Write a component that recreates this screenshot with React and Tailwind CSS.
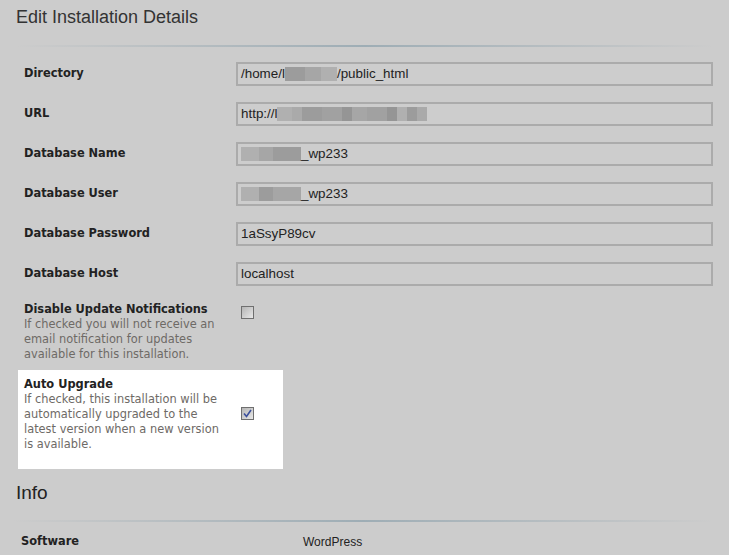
import React from "react";

const labelFont = { fontFamily: '"DejaVu Sans", Verdana, sans-serif' };
const inputFont = { fontFamily: '"Liberation Sans", Arial, sans-serif' };

function Blur({ cells }) {
  // pixelated blur strip used to hide private parts of values
  return (
    <span className="inline-flex h-[14px] align-middle">
      {cells.map((c, i) => (
        <span key={i} className="h-full" style={{ width: c[0], background: c[1] }} />
      ))}
    </span>
  );
}

function Field({ label, children }) {
  return (
    <div className="flex h-[40px] items-center">
      <div className="w-[218px] pl-[6px] text-[11.4px] font-bold text-[#222]" style={labelFont}>
        {label}
      </div>
      <div
        className="flex h-[24px] flex-1 items-center border-2 border-[#ababab] bg-[#cdcdcd] pl-[3px] text-[13.4px] text-[#222]"
        style={inputFont}
      >
        {children}
      </div>
    </div>
  );
}

function Checkbox({ checked }) {
  return (
    <div className="flex h-[13px] w-[13px] items-center justify-center border border-[#6f6f6f] bg-gradient-to-br from-[#b5b5b5] to-[#e8e8e8]">
      {checked && (
        <svg width="9" height="9" viewBox="0 0 9 9">
          <path d="M1 4.5 L3.5 7.5 L8 1" fill="none" stroke="#3b4f9c" strokeWidth="1.6" />
        </svg>
      )}
    </div>
  );
}

function Separator() {
  return (
    <div className="h-[2px] bg-gradient-to-r from-transparent via-[#9eadb5] to-transparent" />
  );
}

export default function App() {
  const g = ["#a6a6a6", "#9c9c9c", "#b0b0b0", "#a1a1a1", "#aaa", "#959595"];
  return (
    <div className="min-h-[555px] w-full bg-[#cccccc] pl-[12px] pr-[16px] text-[#333]">
      <h1 className="pl-[4px] pt-[5px] text-[18px] leading-[24px] text-[#333]" style={inputFont}>
        Edit Installation Details
      </h1>
      <div className="mt-[16px] pl-[4px]">
        <Separator />
      </div>

      <div className="mt-[7px] pl-[6px]">
        <Field label="Directory">
          /home/l
          <Blur cells={[[20, g[1]], [16, g[0]], [16, g[2]]]} />
          /public_html
        </Field>
        <Field label="URL">
          http://l
          <Blur
            cells={[
              [15, g[2]], [10, g[4]], [20, g[1]], [20, g[3]], [10, g[5]], [15, g[0]],
              [20, g[3]], [10, g[5]], [10, g[2]], [10, g[1]], [10, g[4]],
            ]}
          />
        </Field>
        <Field label="Database Name">
          <Blur cells={[[18, g[2]], [14, g[0]], [28, g[1]]]} />
          _wp233
        </Field>
        <Field label="Database User">
          <Blur cells={[[18, g[2]], [14, g[1]], [28, g[0]]]} />
          _wp233
        </Field>
        <Field label="Database Password">1aSsyP89cv</Field>
        <Field label="Database Host">localhost</Field>

        <div className="flex pt-[8px]" style={labelFont}>
          <div className="w-[218px] pl-[6px] pr-[6px] text-[11.4px] leading-[15px]">
            <div className="font-bold text-[#222]">Disable Update Notifications</div>
            <div className="text-[#6e6a66]">
              If checked you will not receive an email notification for updates available for this
              installation.
            </div>
          </div>
          <div className="pl-[5px] pt-[4px]">
            <Checkbox />
          </div>
        </div>

        <div className="mt-[8px] flex h-[99px] w-[265px] items-start bg-white pt-[7px]" style={labelFont}>
          <div className="w-[218px] pl-[6px] pr-[8px] text-[11.4px] leading-[15px]">
            <div className="font-bold text-[#222]">Auto Upgrade</div>
            <div className="text-[#6e6a66]">
              If checked, this installation will be automatically upgraded to the latest version
              when a new version is available.
            </div>
          </div>
          <div className="pl-[5px] pt-[30px]">
            <Checkbox checked />
          </div>
        </div>
      </div>

      <h2 className="pl-[4px] pt-[12px] text-[19px] leading-[24px] text-[#222]" style={inputFont}>
        Info
      </h2>
      <div className="mt-[15px]">
        <Separator />
      </div>
      <div className="flex items-center pt-[11px] text-[11.4px]" style={labelFont}>
        <div className="w-[291px] pl-[9px] font-bold text-[#222]">Software</div>
        <div className="text-[12px] text-[#222]" style={inputFont}>
          WordPress
        </div>
      </div>
    </div>
  );
}
